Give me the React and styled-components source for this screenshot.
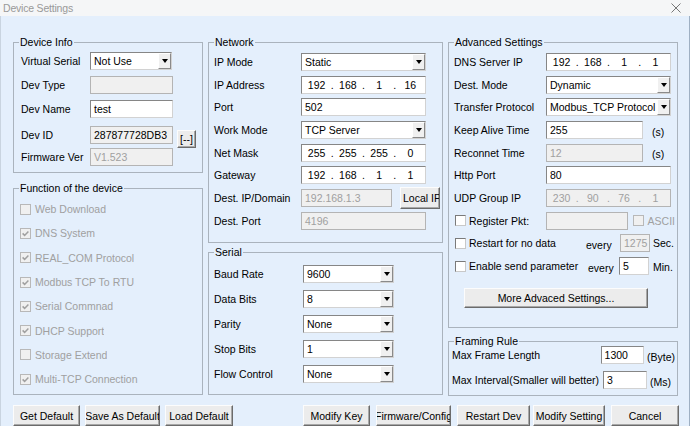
import React from "react";
import styled, { createGlobalStyle } from "styled-components";

const BG = "#e4effc";

const GlobalStyle = createGlobalStyle`
  html, body {
    margin: 0;
    padding: 0;
    background: ${BG};
  }
  body {
    font-family: "Liberation Sans", Arial, sans-serif;
    font-size: 10.5px;
    color: #000;
  }
`;

const Window = styled.div`
  width: 690px;
  height: 426px;
  overflow: hidden;
  display: flex;
  flex-direction: column;
  background: ${BG};
`;

const TitleBar = styled.div`
  height: 16px;
  flex: none;
  display: flex;
  align-items: center;
  justify-content: space-between;
  padding: 0 9px 0 3px;
  background: #f5f6f7;
`;

const Title = styled.span`
  font-size: 10.5px;
  color: #999;
  letter-spacing: -0.2px;
`;

const Body = styled.div`
  flex: 1;
  padding-top: 26px;
  border-left: 1px solid #c9d4e0;
  border-right: 1px solid #9fb0c3;
`;

const Columns = styled.div`
  display: flex;
  gap: 5px;
  padding-left: 12px;
`;

const Column = styled.div`
  width: ${p => p.$w}px;
  display: flex;
  flex-direction: column;
  gap: ${p => p.$gap}px;
`;

const Group = styled.div`
  position: relative;
  box-sizing: border-box;
  height: ${p => p.$h}px;
  border: 1px solid #aab3bd;
  padding: ${p => p.$pt}px 2px 0 ${p => p.$pl}px;
`;

const Legend = styled.span`
  position: absolute;
  top: -7px;
  left: 5px;
  padding: 0 1px;
  line-height: 13px;
  background: ${BG};
  white-space: nowrap;
`;

const Row = styled.div`
  display: grid;
  grid-template-columns: ${p => p.$label}px auto;
  align-items: center;
  height: ${p => p.$h}px;
`;

const Inline = styled.div`
  display: flex;
  align-items: center;
`;

const FlexRow = styled.div`
  display: flex;
  align-items: center;
  height: ${p => p.$h}px;
  overflow: hidden;
  white-space: nowrap;
`;

const Label = styled.span`
  white-space: nowrap;
  color: ${p => (p.$disabled ? "#a0a0a0" : "#000")};
`;

const Unit = styled.span`
  margin-left: ${p => p.$ml}px;
  margin-top: ${p => p.$mt || 0}px;
  white-space: nowrap;
`;

const Field = styled.div`
  box-sizing: border-box;
  width: ${p => p.$w}px;
  height: 18px;
  display: flex;
  align-items: center;
  padding: 0 ${p => (p.$pad != null ? p.$pad : 3)}px;
  background: ${p => (p.$disabled ? "#f0f0f0" : "#fff")};
  color: ${p => (p.$disabled ? "#a0a0a0" : "#000")};
  border: 1px solid;
  border-color: ${p =>
    p.$disabled ? "#b4b4b4" : "#868686 #d2d2d2 #d2d2d2 #868686"};
  white-space: nowrap;
  overflow: hidden;
`;

const ComboText = styled.span`
  flex: 1;
  overflow: hidden;
`;

const DropButton = styled.span`
  box-sizing: border-box;
  width: 13px;
  height: 16px;
  flex: none;
  display: flex;
  align-items: center;
  justify-content: center;
  background: #f0f0f0;
  border: 1px solid;
  border-color: #fff #8a8a8a #8a8a8a #fff;
  &::after {
    content: "";
    border-left: 3.5px solid transparent;
    border-right: 3.5px solid transparent;
    border-top: 4px solid #000;
  }
`;

const Octet = styled.span`
  flex: 1;
  text-align: center;
`;

const Dot = styled.span`
  width: 4px;
  text-align: center;
`;

const PushButton = styled.button`
  box-sizing: border-box;
  width: ${p => p.$w}px;
  height: ${p => p.$h || 21}px;
  margin-left: ${p => p.$ml || 0}px;
  margin-top: ${p => p.$mt || 0}px;
  padding: 0 ${p => (p.$left ? 2 : 0)}px;
  display: flex;
  align-items: center;
  justify-content: ${p => (p.$left ? "flex-start" : "center")};
  overflow: hidden;
  white-space: nowrap;
  font: inherit;
  color: #000;
  background: #ececec;
  border: 1px solid;
  border-color: #fcfcfc #6b6b6b #6b6b6b #fcfcfc;
  box-shadow: inset -1px -1px 0 #a8a8a8;
`;

const Box = styled.span`
  box-sizing: border-box;
  width: 11px;
  height: 11px;
  flex: none;
  display: flex;
  align-items: center;
  justify-content: center;
  background: ${p => (p.$disabled ? "#f0f0f0" : "#fff")};
  border: 1px solid;
  border-color: ${p =>
    p.$disabled ? "#b8b8b8" : "#7a7a7a #c8c8c8 #c8c8c8 #7a7a7a"};
`;

const CheckItem = styled.span`
  display: flex;
  align-items: center;
  gap: ${p => p.$gap || 3}px;
  width: ${p => (p.$w ? `${p.$w}px` : "auto")};
  flex: none;
  overflow: hidden;
`;

const ButtonBar = styled.div`
  display: flex;
  margin-top: 9px;
  padding-left: 12px;
`;

function Check({ checked, disabled }) {
  return (
    <Box $disabled={disabled}>
      {checked && (
        <svg width="7" height="7" viewBox="0 0 7 7">
          <path
            d="M0.6 3.4 L2.6 5.4 L6.4 1.4"
            fill="none"
            stroke={disabled ? "#a0a0a0" : "#000"}
            strokeWidth="1.5"
          />
        </svg>
      )}
    </Box>
  );
}

function Combo({ w, value }) {
  return (
    <Field $w={w} $pad={0}>
      <ComboText style={{ paddingLeft: 3 }}>{value}</ComboText>
      <DropButton />
    </Field>
  );
}

function IpField({ parts, disabled }) {
  return (
    <Field $w={125} $pad={1} $disabled={disabled}>
      {parts.map((part, i) => (
        <React.Fragment key={i}>
          {i > 0 && <Dot>.</Dot>}
          <Octet>{part}</Octet>
        </React.Fragment>
      ))}
    </Field>
  );
}

const functions = [
  ["Web Download", false],
  ["DNS System", true],
  ["REAL_COM Protocol", true],
  ["Modbus TCP To RTU", true],
  ["Serial Commnad", true],
  ["DHCP Support", true],
  ["Storage Extend", false],
  ["Multi-TCP Connection", true],
];

function CloseIcon() {
  return (
    <svg width="10" height="10" viewBox="0 0 10 10">
      <path d="M0.5 0.5 L9.5 9.5 M9.5 0.5 L0.5 9.5" stroke="#777" strokeWidth="1" />
    </svg>
  );
}

export default function App() {
  return (
    <Window>
      <GlobalStyle />
      <TitleBar>
        <Title>Device Settings</Title>
        <CloseIcon />
      </TitleBar>
      <Body>
        <Columns>
          <Column $w={190} $gap={15}>
            <Group $h={131} $pt={6} $pl={7}>
              <Legend>Device Info</Legend>
              <Row $label={69} $h={24}>
                <Label>Virtual Serial</Label>
                <Combo w={82} value="Not Use" />
              </Row>
              <Row $label={69} $h={24}>
                <Label>Dev Type</Label>
                <Field $w={83} $disabled />
              </Row>
              <Row $label={69} $h={24}>
                <Label>Dev Name</Label>
                <Field $w={83}>test</Field>
              </Row>
              <Row $label={69} $h={24}>
                <Label>Dev ID</Label>
                <Inline>
                  <Field $w={83} $disabled style={{ color: "#000" }}>
                    287877728DB3
                  </Field>
                  <PushButton $w={19} $h={18} $ml={4} $mt={9}>
                    [--]
                  </PushButton>
                </Inline>
              </Row>
              <Row $label={69} $h={24}>
                <Label>Firmware Ver</Label>
                <Field $w={83} $disabled>V1.523</Field>
              </Row>
            </Group>
            <Group $h={207} $pt={8} $pl={6}>
              <Legend>Function of the device</Legend>
              {functions.map(([name, on]) => (
                <FlexRow key={name} $h={24.3}>
                  <CheckItem $gap={4}>
                    <Check checked={on} disabled />
                    <Label $disabled>{name}</Label>
                  </CheckItem>
                </FlexRow>
              ))}
            </Group>
          </Column>

          <Column $w={235} $gap={9}>
            <Group $h={201} $pt={7.6} $pl={5}>
              <Legend>Network</Legend>
              <Row $label={87} $h={22.7}>
                <Label>IP Mode</Label>
                <Combo w={125} value="Static" />
              </Row>
              <Row $label={87} $h={22.7}>
                <Label>IP Address</Label>
                <IpField parts={["192", "168", "1", "16"]} />
              </Row>
              <Row $label={87} $h={22.7}>
                <Label>Port</Label>
                <Field $w={125}>502</Field>
              </Row>
              <Row $label={87} $h={22.7}>
                <Label>Work Mode</Label>
                <Combo w={125} value="TCP Server" />
              </Row>
              <Row $label={87} $h={22.7}>
                <Label>Net Mask</Label>
                <IpField parts={["255", "255", "255", "0"]} />
              </Row>
              <Row $label={87} $h={22.7}>
                <Label>Gateway</Label>
                <IpField parts={["192", "168", "1", "1"]} />
              </Row>
              <Row $label={87} $h={22.7}>
                <Label>Dest. IP/Domain</Label>
                <Inline>
                  <Field $w={91} $disabled>192.168.1.3</Field>
                  <PushButton $w={40} $h={22} $ml={8} $left>
                    Local IP
                  </PushButton>
                </Inline>
              </Row>
              <Row $label={87} $h={22.7}>
                <Label>Dest. Port</Label>
                <Field $w={125} $disabled>4196</Field>
              </Row>
            </Group>
            <Group $h={143} $pt={8.5} $pl={5}>
              <Legend>Serial</Legend>
              <Row $label={89} $h={25}>
                <Label>Baud Rate</Label>
                <Combo w={91} value="9600" />
              </Row>
              <Row $label={89} $h={25}>
                <Label>Data Bits</Label>
                <Combo w={91} value="8" />
              </Row>
              <Row $label={89} $h={25}>
                <Label>Parity</Label>
                <Combo w={91} value="None" />
              </Row>
              <Row $label={89} $h={25}>
                <Label>Stop Bits</Label>
                <Combo w={91} value="1" />
              </Row>
              <Row $label={89} $h={25}>
                <Label>Flow Control</Label>
                <Combo w={91} value="None" />
              </Row>
            </Group>
          </Column>

          <Column $w={230} $gap={13}>
            <Group $h={286} $pt={7.6} $pl={5}>
              <Legend>Advanced Settings</Legend>
              <Row $label={92} $h={22.7}>
                <Label>DNS Server IP</Label>
                <IpField parts={["192", "168", "1", "1"]} />
              </Row>
              <Row $label={92} $h={22.7}>
                <Label>Dest. Mode</Label>
                <Combo w={125} value="Dynamic" />
              </Row>
              <Row $label={92} $h={22.7}>
                <Label>Transfer Protocol</Label>
                <Combo w={125} value="Modbus_TCP Protocol" />
              </Row>
              <Row $label={92} $h={22.7}>
                <Label>Keep Alive Time</Label>
                <Inline>
                  <Field $w={97}>255</Field>
                  <Unit $ml={9} $mt={3}>(s)</Unit>
                </Inline>
              </Row>
              <Row $label={92} $h={22.7}>
                <Label>Reconnet Time</Label>
                <Inline>
                  <Field $w={97} $disabled>12</Field>
                  <Unit $ml={9} $mt={3}>(s)</Unit>
                </Inline>
              </Row>
              <Row $label={92} $h={22.7}>
                <Label>Http Port</Label>
                <Field $w={125}>80</Field>
              </Row>
              <Row $label={92} $h={22.7}>
                <Label>UDP Group IP</Label>
                <IpField parts={["230", "90", "76", "1"]} disabled />
              </Row>
              <FlexRow $h={22.7} style={{ paddingLeft: 1 }}>
                <CheckItem $w={91}>
                  <Check />
                  <Label>Register Pkt:</Label>
                </CheckItem>
                <Field $w={83} $disabled />
                <CheckItem $gap={4} style={{ marginLeft: 5 }}>
                  <Check disabled />
                  <Label $disabled>ASCII</Label>
                </CheckItem>
              </FlexRow>
              <FlexRow $h={22.7} style={{ paddingLeft: 1 }}>
                <CheckItem $w={131}>
                  <Check />
                  <Label>Restart for no data</Label>
                </CheckItem>
                <Unit $ml={0} $mt={4} style={{ width: 34 }}>every</Unit>
                <Field $w={30} $disabled>1275</Field>
                <Unit $ml={3}>Sec.</Unit>
              </FlexRow>
              <FlexRow $h={22.7} style={{ paddingLeft: 1 }}>
                <CheckItem $w={131}>
                  <Check />
                  <Label>Enable send parameter</Label>
                </CheckItem>
                <Unit $ml={2} $mt={4} style={{ width: 31 }}>every</Unit>
                <Field $w={30}>5</Field>
                <Unit $ml={4} $mt={2}>Min.</Unit>
              </FlexRow>
              <PushButton $w={184} $h={20} $ml={10} $mt={11}>
                More Advaced Settings...
              </PushButton>
            </Group>
            <Group $h={55} $pt={0.8} $pl={3}>
              <Legend>Framing Rule</Legend>
              <FlexRow $h={24.5}>
                <Label style={{ width: 151 }}>Max Frame Length</Label>
                <Field $w={44}>1300</Field>
                <Unit $ml={3} $mt={4}>(Byte)</Unit>
              </FlexRow>
              <FlexRow $h={24.5}>
                <Label style={{ width: 151 }}>Max Interval(Smaller will better)</Label>
                <Field $w={44}>3</Field>
                <Unit $ml={3} $mt={4}>(Ms)</Unit>
              </FlexRow>
            </Group>
          </Column>
        </Columns>

        <ButtonBar>
          <PushButton $w={67}>Get Default</PushButton>
          <PushButton $w={75} $ml={5}>Save As Default</PushButton>
          <PushButton $w={68} $ml={5}>Load Default</PushButton>
          <PushButton $w={67} $ml={70}>Modify Key</PushButton>
          <PushButton $w={75} $ml={6}>Firmware/Config</PushButton>
          <PushButton $w={73} $ml={6}>Restart Dev</PushButton>
          <PushButton $w={72} $ml={3}>Modify Setting</PushButton>
          <PushButton $w={68} $ml={6}>Cancel</PushButton>
        </ButtonBar>
      </Body>
    </Window>
  );
}
